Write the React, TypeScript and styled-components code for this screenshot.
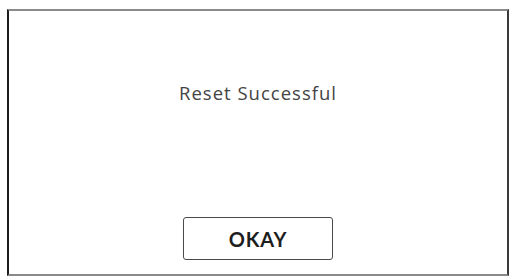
import React from "react"
import styled, { createGlobalStyle } from "styled-components"

const GlobalStyle = createGlobalStyle`
  html, body {
    margin: 0;
    padding: 0;
    background: #ffffff;
  }
  body {
    font-family: "Open Sans", "Liberation Sans", sans-serif;
  }
`

const Frame = styled.div`
  box-sizing: border-box;
  margin: 9px 0 0 7px;
  width: 502px;
  height: 267px;
  border-top: 2px solid #8a8a8a;
  border-left: 2px solid #1c1c1c;
  border-right: 2px solid #3a3a3a;
  border-bottom: 2px solid #8a8a8a;
  display: flex;
  flex-direction: column;
  align-items: center;
  padding: 71px 0 14px;
`

const Message = styled.p`
  margin: 0;
  font-family: "Open Sans", "Liberation Sans", sans-serif;
  font-size: 18.5px;
  line-height: 22px;
  font-weight: 400;
  letter-spacing: 1px;
  color: #444444;
`

const Spacer = styled.div`
  flex: 1;
`

const OkayButton = styled.button`
  box-sizing: border-box;
  width: 150px;
  height: 43px;
  border: 1.5px solid #4a4a4a;
  border-radius: 3px;
  background: #ffffff;
  font-family: Lato, "Liberation Sans", sans-serif;
  font-size: 20px;
  font-weight: 700;
  letter-spacing: 0.8px;
  color: #1e1e1e;
  cursor: pointer;
  padding: 0;
`

export default function App() {
  return (
    <>
      <GlobalStyle />
      <Frame>
        <Message>Reset Successful</Message>
        <Spacer />
        <OkayButton>OKAY</OkayButton>
      </Frame>
    </>
  )
}
